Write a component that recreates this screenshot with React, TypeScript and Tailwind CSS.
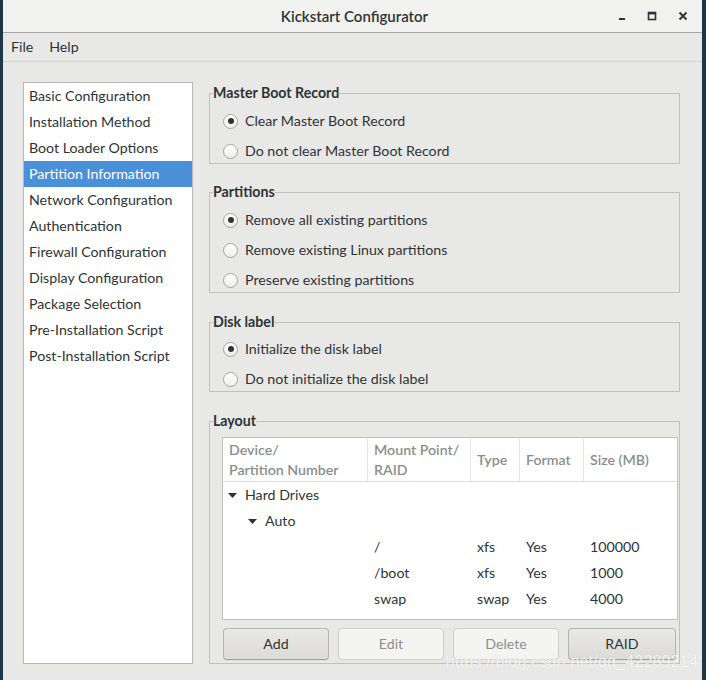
import React from 'react';

const sections = [
  'Basic Configuration',
  'Installation Method',
  'Boot Loader Options',
  'Partition Information',
  'Network Configuration',
  'Authentication',
  'Firewall Configuration',
  'Display Configuration',
  'Package Selection',
  'Pre-Installation Script',
  'Post-Installation Script',
];

const partitions = [
  { mount: '/', type: 'xfs', format: 'Yes', size: '100000' },
  { mount: '/boot', type: 'xfs', format: 'Yes', size: '1000' },
  { mount: 'swap', type: 'swap', format: 'Yes', size: '4000' },
];

function Radio({ checked, label }: { checked?: boolean; label: string }) {
  return (
    <div className="flex items-center h-[24px]">
      <span className="w-[15px] h-[15px] rounded-full border border-[#a4a4a2] bg-linear-to-b from-white to-[#eeedec] flex items-center justify-center">
        {checked && <span className="w-[6px] h-[6px] rounded-full bg-[#2e3436]" />}
      </span>
      <span className="ml-[7px]">{label}</span>
    </div>
  );
}

function Frame({ title, className, children }: { title: string; className?: string; children: React.ReactNode }) {
  return (
    <fieldset className={'border border-[#c0c0be] min-w-0 ' + (className ?? '')}>
      <legend className="ml-[3px] font-bold leading-[18px] text-[#2e3436]">{title}</legend>
      {children}
    </fieldset>
  );
}

function Arrow() {
  return (
    <svg width="9" height="5" viewBox="0 0 9 5" className="shrink-0">
      <path d="M0 0 L9 0 L4.5 5 Z" fill="#2e3436" />
    </svg>
  );
}

function Btn({ label, disabled }: { label: string; disabled?: boolean }) {
  return (
    <button
      className={
        disabled
          ? 'h-[32px] rounded-[4px] border border-[#cfcdca] bg-[#f4f4f3] text-[#8d9091]'
          : 'h-[32px] rounded-[4px] border border-[#b6b4b0] border-b-[#a2a09c] bg-linear-to-b from-[#e8e8e7] to-[#dcdbd8] text-[#2e3436] shadow-[0_1px_0_rgba(0,0,0,0.06)]'
      }
    >
      {label}
    </button>
  );
}

export default function App() {
  return (
    <div
      className="relative w-[706px] h-[680px] bg-[#1e3748] pl-[3px] pr-[4px] overflow-hidden text-[14.2px] text-[#2e3436]"
      style={{ fontFamily: 'Lato, "Noto Sans", sans-serif' }}
    >
      <div className="flex flex-col h-full bg-[#e8e8e7]">
        {/* Title bar */}
        <div className="h-[33px] shrink-0 bg-[#f1f1f0] border-b border-[#a6a6a4] flex items-center relative">
          <div className="flex-1 text-center font-semibold text-[15px] pl-[4px]">Kickstart Configurator</div>
          <div className="absolute right-[14px] top-0 h-full flex items-center gap-[21px]">
            <svg width="8" height="8" viewBox="0 0 8 8">
              <rect x="1" y="6" width="6" height="2" fill="#2e3436" />
            </svg>
            <svg width="10" height="10" viewBox="0 0 10 10">
              <rect x="1.5" y="1.5" width="7" height="7" fill="none" stroke="#2e3436" strokeWidth="1.6" />
              <rect x="1" y="1" width="8" height="2.4" fill="#2e3436" />
            </svg>
            <svg width="10" height="10" viewBox="0 0 10 10">
              <path d="M1.5 1.5 L8.5 8.5 M8.5 1.5 L1.5 8.5" stroke="#2e3436" strokeWidth="1.9" />
            </svg>
          </div>
        </div>

        {/* Menu bar */}
        <div className="h-[29px] shrink-0 border-b border-[#d4d4d2] flex items-center">
          <span className="px-[8px]">File</span>
          <span className="px-[8px]">Help</span>
        </div>

        {/* Main area */}
        <div className="flex-1 flex pl-[20px] pr-[22px] pt-[20px] pb-[16px] gap-[16px] min-h-0">
          {/* Sidebar */}
          <div className="w-[170px] shrink-0 bg-white border border-[#b8b8b5]">
            {sections.map((s) => (
              <div
                key={s}
                className={
                  'h-[26px] flex items-center pl-[5px] ' +
                  (s === 'Partition Information' ? 'bg-[#4a90d9] text-white' : '')
                }
              >
                {s}
              </div>
            ))}
          </div>

          {/* Right column */}
          <div className="flex-1 flex flex-col min-w-0 pt-[2px]">
            <Frame title="Master Boot Record">
              <div className="pl-[13px] pt-[7px] flex flex-col gap-[6px]">
                <Radio checked label="Clear Master Boot Record" />
                <Radio label="Do not clear Master Boot Record" />
              </div>
            </Frame>

            <Frame title="Partitions" className="mt-[19px]">
              <div className="pl-[13px] pt-[7px] flex flex-col gap-[6px]">
                <Radio checked label="Remove all existing partitions" />
                <Radio label="Remove existing Linux partitions" />
                <Radio label="Preserve existing partitions" />
              </div>
            </Frame>

            <Frame title="Disk label" className="mt-[20px]">
              <div className="pl-[13px] pt-[6px] flex flex-col gap-[6px]">
                <Radio checked label="Initialize the disk label" />
                <Radio label="Do not initialize the disk label" />
              </div>
            </Frame>

            <Frame title="Layout" className="mt-[20px] flex-1 flex flex-col">
              <div className="pl-[12px] pr-[1px] pt-[7px] pb-[2px] flex flex-col">
                <div className="h-[183px] bg-white border border-[#c0c0be]">
                  <div className="h-[44px] grid grid-cols-[145px_103px_49px_64px_1fr] border-b border-[#dcdcda] text-[#8b8e8f] font-semibold leading-[20px]">
                    <div className="pl-[6px] flex flex-col justify-center border-r border-[#e4e4e2]">
                      <span>Device/</span>
                      <span>Partition Number</span>
                    </div>
                    <div className="pl-[6px] flex flex-col justify-center border-r border-[#e4e4e2]">
                      <span>Mount Point/</span>
                      <span>RAID</span>
                    </div>
                    <div className="pl-[6px] flex items-center border-r border-[#e4e4e2]">Type</div>
                    <div className="pl-[6px] flex items-center border-r border-[#e4e4e2]">Format</div>
                    <div className="pl-[6px] flex items-center">Size (MB)</div>
                  </div>
                  <div className="h-[26px] flex items-center pl-[5px] gap-[8px]">
                    <Arrow />
                    <span>Hard Drives</span>
                  </div>
                  <div className="h-[26px] flex items-center pl-[25px] gap-[8px]">
                    <Arrow />
                    <span>Auto</span>
                  </div>
                  {partitions.map((p) => (
                    <div key={p.mount} className="h-[26px] grid grid-cols-[145px_103px_49px_64px_1fr] items-center">
                      <span />
                      <span className="pl-[6px]">{p.mount}</span>
                      <span className="pl-[6px]">{p.type}</span>
                      <span className="pl-[6px]">{p.format}</span>
                      <span className="pl-[6px]">{p.size}</span>
                    </div>
                  ))}
                </div>
                <div className="mt-[8px] grid grid-cols-[106px_106px_106px_108px] gap-[9px] pl-[1px]">
                  <Btn label="Add" />
                  <Btn label="Edit" disabled />
                  <Btn label="Delete" disabled />
                  <Btn label="RAID" />
                </div>
              </div>
            </Frame>
          </div>
        </div>
      </div>

      {/* watermark */}
      <div
        className="absolute right-[8px] bottom-[6px] text-[16px] text-white/80 tracking-[0.2px]"
        style={{ fontFamily: '"Liberation Sans", sans-serif', textShadow: '0 0 1px rgba(0,0,0,0.15)' }}
      >
        https://blog.csdn.net/qq_42289214
      </div>
    </div>
  );
}
